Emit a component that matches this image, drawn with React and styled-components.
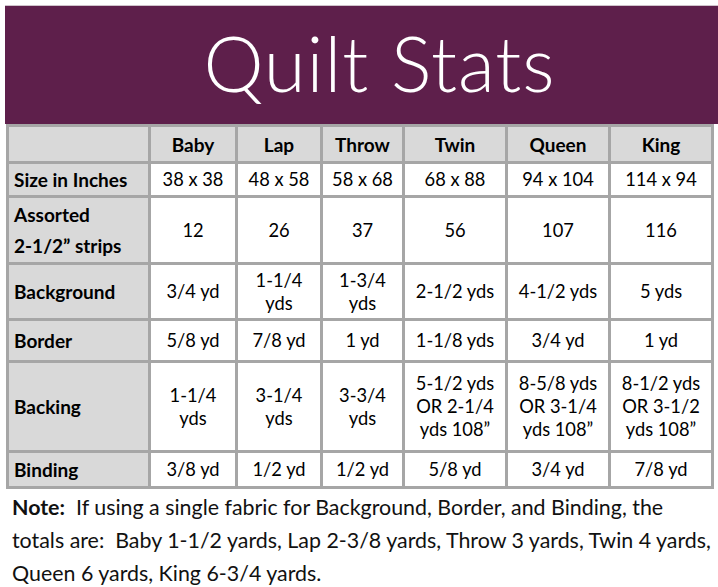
import React from 'react';
import styled, { createGlobalStyle } from 'styled-components';

const GlobalStyle = createGlobalStyle`
  html, body {
    margin: 0;
    padding: 0;
    background: #ffffff;
  }
  body {
    font-family: Lato, "Open Sans", sans-serif;
    color: #000000;
  }
`;

const Page = styled.div`
  width: 718px;
  height: 587px;
  overflow: hidden;
  padding-top: 5px;
  box-sizing: border-box;
`;

const Banner = styled.div`
  margin-left: 5px;
  height: 119px;
  background: #5e1f4b;
  border-top: 1px solid #cfc3cb;
  box-sizing: border-box;
  display: flex;
  align-items: center;
  justify-content: center;
  padding-left: 36px;
`;

const Title = styled.h1`
  margin: 0;
  font-family: Lato, sans-serif;
  font-weight: 300;
  font-size: 76px;
  letter-spacing: 1px;
  color: #ffffff;
  line-height: 1;
  padding-bottom: 4px;
`;

const Grid = styled.div`
  margin-left: 6px;
  width: 708px;
  box-sizing: border-box;
  display: grid;
  grid-template-columns: 139px 84px 82px 79px 100px 100px 100px;
  grid-template-rows: 34px 31px 64px 53px 39px 87px 33px;
  gap: 3px;
  padding: 3px;
  background: #a6a6a6;
`;

const Cell = styled.div`
  background: ${({ $shaded }) => ($shaded ? '#d9d9d9' : '#ffffff')};
  display: flex;
  flex-direction: column;
  justify-content: center;
  align-items: ${({ $label }) => ($label ? 'flex-start' : 'center')};
  text-align: ${({ $label }) => ($label ? 'left' : 'center')};
  padding-left: ${({ $label }) => ($label ? '5px' : '0')};
  font-size: ${({ $bold }) => ($bold ? '19px' : '18.3px')};
  font-weight: ${({ $bold }) => ($bold ? 700 : 400)};
  line-height: ${({ $spread }) => ($spread ? '31px' : '23px')};
  white-space: pre-line;
`;

const Note = styled.div`
  margin: 2px 0 0 12px;
  font-size: 21.4px;
  line-height: 33px;
  color: #111111;
  white-space: nowrap;
`;

const NoteLabel = styled.span`
  font-weight: 700;
`;

const sizes = ['Baby', 'Lap', 'Throw', 'Twin', 'Queen', 'King'];

const rows = [
  { label: 'Size in Inches', values: ['38 x 38', '48 x 58', '58 x 68', '68 x 88', '94 x 104', '114 x 94'] },
  { label: 'Assorted\n2-1/2\u201D strips', spread: true, values: ['12', '26', '37', '56', '107', '116'] },
  { label: 'Background', values: ['3/4 yd', '1-1/4\nyds', '1-3/4\nyds', '2-1/2 yds', '4-1/2 yds', '5 yds'] },
  { label: 'Border', values: ['5/8 yd', '7/8 yd', '1 yd', '1-1/8 yds', '3/4 yd', '1 yd'] },
  {
    label: 'Backing',
    values: [
      '1-1/4\nyds',
      '3-1/4\nyds',
      '3-3/4\nyds',
      '5-1/2 yds\nOR 2-1/4\nyds 108\u201D',
      '8-5/8 yds\nOR 3-1/4\nyds 108\u201D',
      '8-1/2 yds\nOR 3-1/2\nyds 108\u201D',
    ],
  },
  { label: 'Binding', values: ['3/8 yd', '1/2 yd', '1/2 yd', '5/8 yd', '3/4 yd', '7/8 yd'] },
];

export default function App() {
  return (
    <Page>
      <GlobalStyle />
      <Banner>
        <Title>Quilt Stats</Title>
      </Banner>
      <Grid>
        <Cell $shaded />
        {sizes.map((s) => (
          <Cell key={s} $shaded $bold>
            {s}
          </Cell>
        ))}
        {rows.map((row) => (
          <React.Fragment key={row.label}>
            <Cell $shaded $bold $label $spread={row.spread}>
              {row.label}
            </Cell>
            {row.values.map((v, i) => (
              <Cell key={i}>{v}</Cell>
            ))}
          </React.Fragment>
        ))}
      </Grid>
      <Note>
        <NoteLabel>Note:</NoteLabel>&nbsp; If using a single fabric for Background, Border, and Binding, the
        <br />
        totals are:&nbsp; Baby 1-1/2 yards, Lap 2-3/8 yards, Throw 3 yards, Twin 4 yards,
        <br />
        Queen 6 yards, King 6-3/4 yards.
      </Note>
    </Page>
  );
}
